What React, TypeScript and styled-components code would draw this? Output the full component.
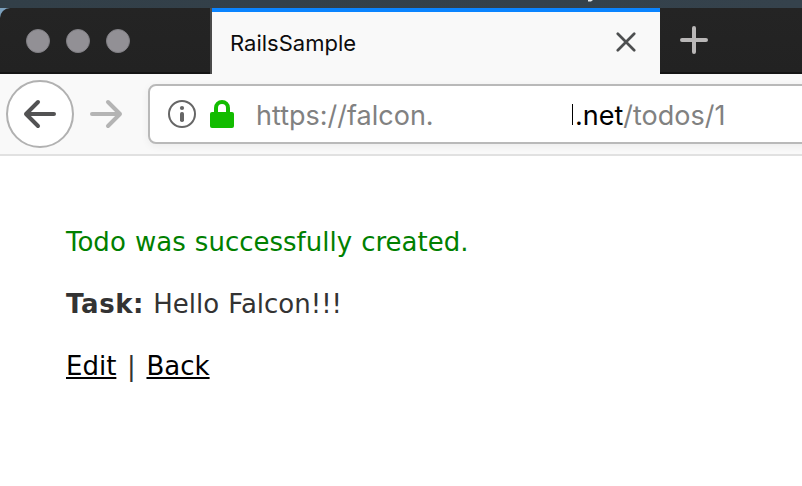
import React from "react";
import styled, { createGlobalStyle } from "styled-components";

const GlobalStyle = createGlobalStyle`
  * { box-sizing: border-box; }
  body { margin: 0; background: #fff; overflow: hidden; }
`;

const Window = styled.div`
  display: flex;
  flex-direction: column;
  width: 802px;
  height: 486px;
  overflow: hidden;
  background: #fff;
`;

const DesktopStrip = styled.div`
  flex: none;
  height: 8px;
  padding-left: 587px;
  background: linear-gradient(90deg, #323f48, #35424c);
`;

const Fragment = styled.svg`
  display: block;
`;

const TabBarBackdrop = styled.div`
  flex: none;
  background: linear-gradient(90deg, #7ba0bd 12px, #222 12px);
`;

const TabBar = styled.div`
  display: flex;
  height: 66px;
  border-top-left-radius: 10px;
  background: linear-gradient(#242424, #222 64px, #151515 64px);
`;

const WindowControls = styled.div`
  display: flex;
  gap: 16px;
  width: 212px;
  padding: 21px 0 0 26px;
  border-right: 2px solid #4b4b4b;
`;

const ControlDot = styled.span`
  width: 24px;
  height: 24px;
  border-radius: 50%;
  border: 1px solid #807f84;
  background: #929095;
`;

const Tab = styled.div`
  display: flex;
  justify-content: space-between;
  width: 448px;
  padding: 0 24px 0 18px;
  border-top: 4px solid #0a84ff;
  background: #f9f9f9;
`;

const TabTitle = styled.span`
  font: 400 22px/62px Inter, "Liberation Sans", sans-serif;
  color: #0c0c0d;
`;

const CloseIcon = styled.svg`
  margin-top: 20px;
`;

const NewTabIcon = styled.svg`
  margin: 17px 0 0 19px;
`;

const NavBar = styled.div`
  display: flex;
  flex: none;
  height: 82px;
  padding: 6px 0 0 6px;
  border-bottom: 2px solid #e1e1e1;
  background: #f9f9f9;
`;

const BackButton = styled.div`
  flex: none;
  width: 68px;
  height: 68px;
  border: 2px solid #b1b1b1;
  border-radius: 50%;
  background: #fff;
`;

const ForwardButton = styled.div`
  flex: none;
  width: 64px;
  height: 64px;
  padding: 2px 0 0;
  margin-right: 10px;
`;

const AddressBar = styled.div`
  display: flex;
  flex: none;
  width: 680px;
  height: 60px;
  margin-top: 4px;
  padding-left: 16px;
  border: 2px solid #b9b9b9;
  border-radius: 8px;
  background: #fff;
  box-shadow: 0 2px 8px rgba(0, 0, 0, 0.06);
`;

const IdentityIcon = styled.svg`
  flex: none;
  margin: 14px 14px 0 2px;
`;

const LockIcon = styled.svg`
  flex: none;
  margin: 14px 22px 0 0;
`;

const UrlPart = styled.span<{ $strong?: boolean; $width?: number }>`
  flex: none;
  width: ${(p) => (p.$width ? `${p.$width}px` : "auto")};
  font: 400 27px/59px Inter, "Liberation Sans", sans-serif;
  white-space: nowrap;
  color: ${(p) => (p.$strong ? "#000" : "#818181")};
`;

const ClippedLetter = styled.span`
  flex: none;
  width: 1px;
  height: 21px;
  margin: 18px 2px 0 0;
  background: #000;
`;

const Page = styled.main`
  display: flex;
  flex-direction: column;
  gap: 26px;
  padding: 68px 66px;
  font: 26px/36px Verdana, "DejaVu Sans", sans-serif;
  color: #333;
`;

const Line = styled.p<{ $notice?: boolean }>`
  margin: 0;
  white-space: nowrap;
  word-spacing: 0.9px;
  color: ${(p) => (p.$notice ? "green" : "#333")};
`;

const Label = styled.b`
  font-weight: 700;
  letter-spacing: 0.6px;
`;

const Separator = styled.span`
  margin: 0 1.5px;
`;

const Link = styled.a`
  color: #000;
  text-decoration: underline;
  text-decoration-thickness: 2px;
  text-underline-offset: 2px;
`;

export default function App() {
  return (
    <>
      <GlobalStyle />
      <Window>
        <DesktopStrip>
          <Fragment width="8" height="2">
            <path d="M1 0h5l-2 1.5H1z" fill="#e5e8ea" />
          </Fragment>
        </DesktopStrip>
        <TabBarBackdrop>
          <TabBar>
            <WindowControls>
              <ControlDot />
              <ControlDot />
              <ControlDot />
            </WindowControls>
            <Tab>
              <TabTitle>RailsSample</TabTitle>
              <CloseIcon width="20" height="20" fill="none" stroke="#4d4f50" strokeWidth="2.7" strokeLinecap="round">
                <path d="M1.8 1.8l16.4 16.4M18.2 1.8L1.8 18.2" />
              </CloseIcon>
            </Tab>
            <NewTabIcon width="30" height="30" fill="none" stroke="#b9b7b7" strokeWidth="4" strokeLinecap="round">
              <path d="M15 3v24M3 15h24" />
            </NewTabIcon>
          </TabBar>
        </TabBarBackdrop>
        <NavBar>
          <BackButton>
            <svg width="64" height="64" fill="none" stroke="#525253" strokeWidth="4" strokeLinecap="round" strokeLinejoin="round">
              <path d="M46 32H18M30 20L18 32l12 12" />
            </svg>
          </BackButton>
          <ForwardButton>
            <svg width="64" height="64" fill="none" stroke="#b4b4b4" strokeWidth="4" strokeLinecap="round" strokeLinejoin="round">
              <path d="M18 32h28M34 20l12 12-12 12" />
            </svg>
          </ForwardButton>
          <AddressBar>
            <IdentityIcon width="28" height="28">
              <circle cx="14" cy="14" r="13" fill="none" stroke="#666" strokeWidth="2" />
              <circle cx="14" cy="8" r="2.1" fill="#666" />
              <rect x="12" y="12" width="4" height="10" rx="1.8" fill="#666" />
            </IdentityIcon>
            <LockIcon width="24" height="28">
              <path d="M6 14V8a6 6 0 0 1 12 0v6" fill="none" stroke="#12bc00" strokeWidth="4" />
              <rect x="0" y="12" width="24" height="16" rx="2" fill="#12bc00" />
            </LockIcon>
            <UrlPart $width={316}>https://falcon.</UrlPart>
            <ClippedLetter />
            <UrlPart $strong>.net</UrlPart>
            <UrlPart>/todos/1</UrlPart>
          </AddressBar>
        </NavBar>
        <Page>
          <Line $notice>Todo was successfully created.</Line>
          <Line>
            <Label>Task:</Label> Hello Falcon!!!
          </Line>
          <Line>
            <Link>Edit</Link> <Separator>|</Separator> <Link>Back</Link>
          </Line>
        </Page>
      </Window>
    </>
  );
}
